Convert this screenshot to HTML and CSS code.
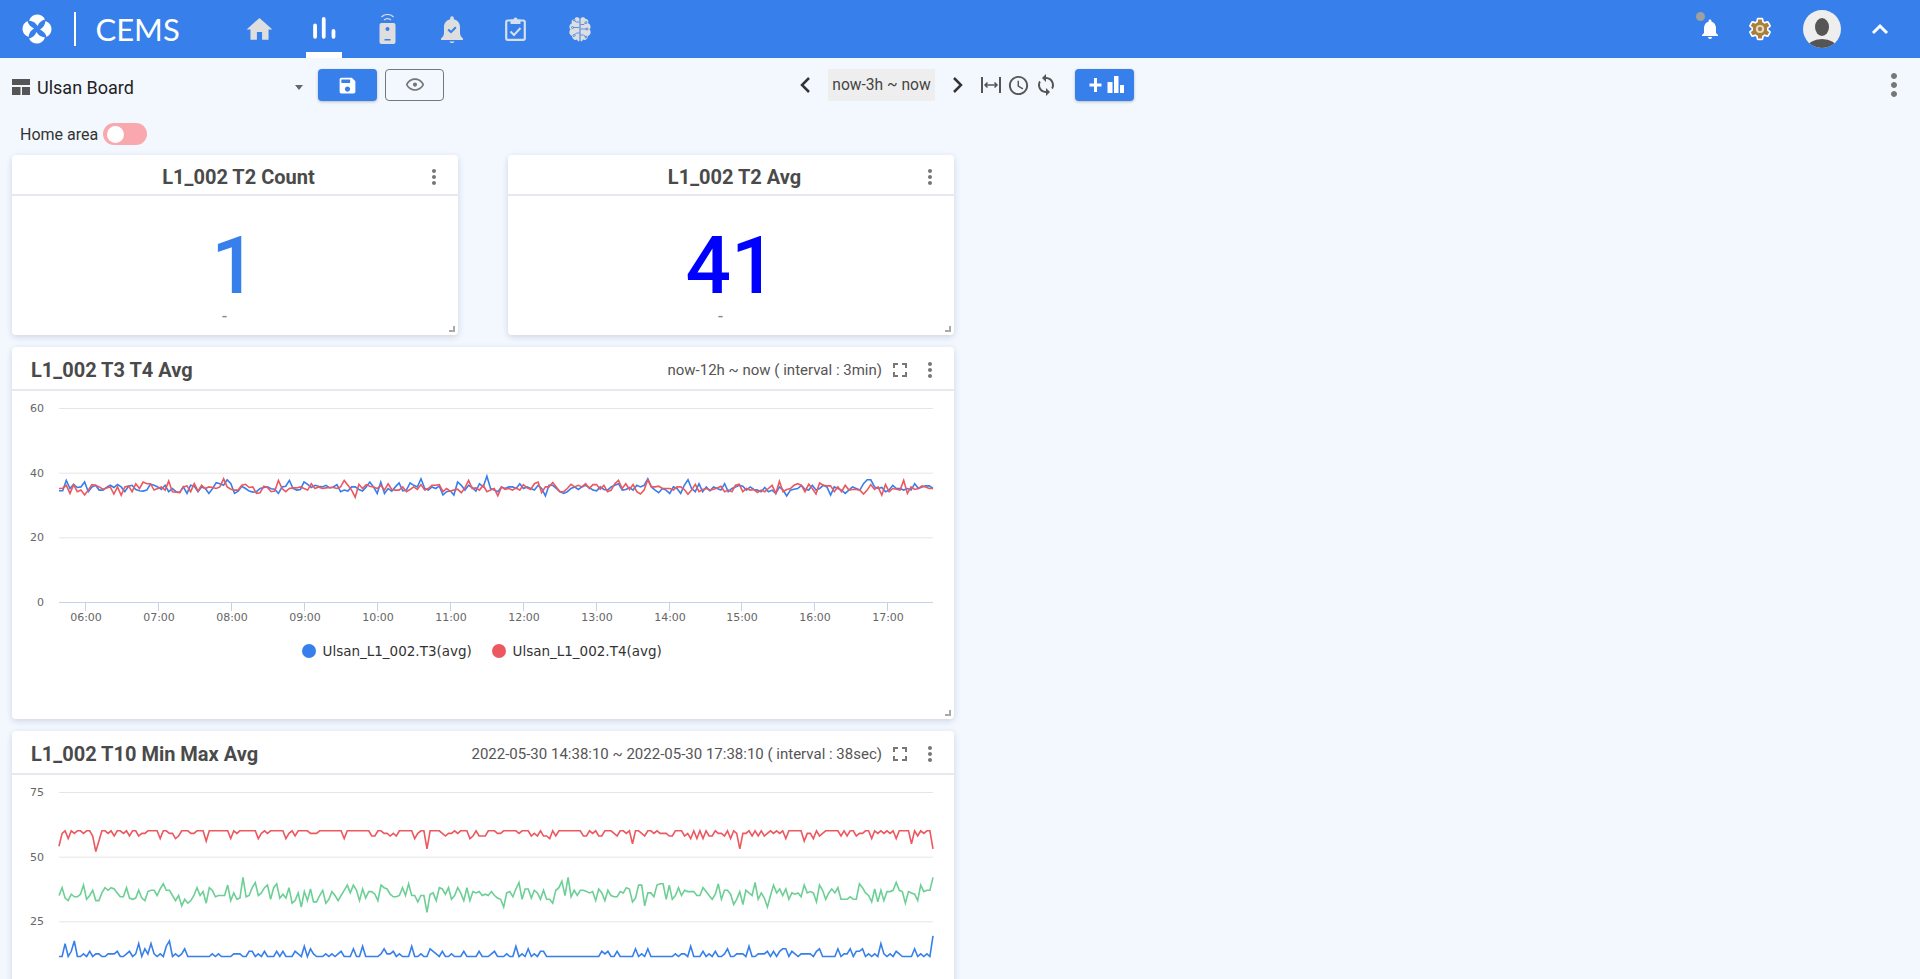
FILE: index.html
```html
<!DOCTYPE html>
<html lang="ko">

<head>
    <meta charset="UTF-8">
    <meta name="viewport" content="width=device-width, initial-scale=1.0">
    <title>CEMS</title>
    <link rel="stylesheet" href="styles.css">
</head>

<body>
    <svg class="sprite" aria-hidden="true">
        <symbol id="i-more" viewBox="0 0 24 24"><path d="M12 8c1.1 0 2-.9 2-2s-.9-2-2-2-2 .9-2 2 .9 2 2 2zm0 2c-1.1 0-2 .9-2 2s.9 2 2 2 2-.9 2-2-.9-2-2-2zm0 6c-1.1 0-2 .9-2 2s.9 2 2 2 2-.9 2-2-.9-2-2-2z"/></symbol>
        <symbol id="i-full" viewBox="0 0 24 24"><path d="M7 14H5v5h5v-2H7v-3zm-2-4h2V7h3V5H5v5zm12 7h-3v2h5v-5h-2v3zM14 5v2h3v3h2V5h-5z"/></symbol>
    </svg>

    <header class="topbar">
        <svg class="logo-mark" viewBox="0 0 30 30">
            <g fill="#fff">
                <path id="petal" d="M7 6.500C8.500 2.500 11.500.5 15 .5c3.500 0 6.500 1.700 8 5-3 .5-6 3-7.500 6.500C14 9 11 7 7 6.500z"/>
                <use href="#petal" transform="rotate(90 15 15)"/>
                <use href="#petal" transform="rotate(180 15 15)"/>
                <use href="#petal" transform="rotate(270 15 15)"/>
            </g>
        </svg>
        <span class="logo-divider"></span>
        <span class="logo-text">CEMS</span>

        <nav class="nav">
            <a class="nav-item">
                <svg viewBox="0 0 24 24" width="31" height="31"><path d="M10 20v-6h4v6h5v-8h3L12 3 2 12h3v8z"/></svg>
            </a>
            <a class="nav-item active">
                <svg viewBox="0 0 24 24" width="26" height="26"><rect x="2" y="7" width="3.5" height="14" rx="1.75"/><rect x="10" y="1" width="3.5" height="20" rx="1.75"/><rect x="19" y="12" width="3.5" height="9" rx="1.75"/></svg>
            </a>
            <a class="nav-item">
                <svg viewBox="0 0 18 30" width="19" height="30">
                    <rect x="1" y="9" width="16" height="21" rx="2"/>
                    <circle cx="9" cy="15" r="2" fill="#377fea"/>
                    <rect x="6" y="25" width="6" height="1.5" fill="#377fea"/>
                    <path d="M5.5 6a5 5 0 0 1 7 0M3 3a8.500 8.500 0 0 1 12 0" fill="none" stroke="#dedede" stroke-width="1.2"/>
                </svg>
            </a>
            <a class="nav-item">
                <svg viewBox="0 0 22 27" width="22" height="27"><path d="M11 27c1.300 0 2.500-.6 2.500-1.500h-5c0 .9 1.200 1.500 2.500 1.500zM22 22.500c-2-1.500-3-3-3-6V11c0-4-2.500-7-6.200-7.800V2a1.800 1.800 0 0 0-3.600 0v1.200C5.500 4 3 7 3 11v5.500c0 3-1 4.500-3 6V24h22z"/><path d="M7.200 13.500l2.800 2.600 4.800-4.800" fill="none" stroke="#377fea" stroke-width="2"/></svg>
            </a>
            <a class="nav-item">
                <svg viewBox="0 0 21 24" width="21" height="24">
                    <rect x="1.2" y="3.5" width="18.6" height="19.3" rx="1.5" fill="none" stroke="#d6dfee" stroke-width="2.2"/>
                    <path d="M5.500 2.500h3a2 2 0 0 1 4 0h3v4.500h-10z" fill="#d6dfee"/>
                    <path d="M5.500 14.500l3.500 3.500 6.500-7" fill="none" stroke="#d6dfee" stroke-width="2"/>
                </svg>
            </a>
            <a class="nav-item">
                <svg viewBox="0 0 24 27" width="24" height="27">
                    <path d="M11.500 2.500C10 .5 7 1 6.500 3 4 3 3 5.500 4 7 1.300 8.500.6 11.500 2.500 13.500.5 15.500 1.200 19 4 20c0 3 3 4.800 5 3.500 1 2.500 2.500 2.500 2.500.5zM12.500 2.500C14 .5 17 1 17.500 3 20 3 21 5.500 20 7c2.700 1.500 3.400 4.500 1.500 6.500 2 2 1.300 5.500-1.500 6.500 0 3-3 4.800-5 3.500-1 2.500-2.500 2.500-2.500.5z"/>
                    <g fill="none" stroke="#377fea" stroke-width=".8">
                        <path d="M11.500 6H8l-1.500-1.500M11.500 11.500H5M11.500 17H8.500l-2 2M12.500 8.500H16l1.500-1.500M12.500 13h6M12.500 19h3l2 1.500"/>
                        <circle cx="6" cy="4" r="1"/><circle cx="4.5" cy="11.5" r="1"/><circle cx="6" cy="19.5" r="1"/><circle cx="18" cy="6.5" r="1"/><circle cx="19" cy="13" r="1"/><circle cx="18" cy="21" r="1"/>
                    </g>
                </svg>
            </a>
        </nav>

        <div class="topbar-right">
            <span class="bell">
                <span class="bell-dot"></span>
                <svg viewBox="0 0 24 24" width="24" height="24" fill="#fff"><path d="M12 22c1.100 0 2-.9 2-2h-4c0 1.100.9 2 2 2zm6-6v-5c0-3.070-1.640-5.640-4.500-6.320V4c0-.83-.67-1.500-1.500-1.500s-1.500.67-1.500 1.500v.68C7.630 5.360 6 7.920 6 11v5l-2 2v1h16v-1l-2-2z"/></svg>
            </span>
            <svg class="gear" viewBox="0 0 24 24" width="26" height="26">
                <path fill="#a8803c" stroke="#fff" stroke-width="1.5" d="M19.140 12.940c.04-.3.06-.61.06-.94 0-.32-.02-.64-.07-.94l2.030-1.580c.18-.14.23-.41.12-.61l-1.920-3.320c-.12-.22-.37-.29-.59-.22l-2.390.96c-.5-.38-1.030-.7-1.620-.94l-.36-2.540c-.04-.24-.24-.41-.48-.41h-3.840c-.24 0-.43.17-.47.41l-.36 2.540c-.59.24-1.130.57-1.620.94l-2.390-.96c-.22-.08-.47 0-.59.22L2.740 8.870c-.12.21-.08.47.12.61l2.030 1.580c-.05.3-.09.63-.09.94s.02.64.07.94l-2.030 1.580c-.18.14-.23.41-.12.61l1.920 3.320c.12.22.37.29.59.22l2.390-.96c.5.38 1.030.7 1.620.94l.36 2.540c.05.24.24.41.48.41h3.840c.24 0 .44-.17.47-.41l.36-2.540c.59-.24 1.130-.56 1.620-.94l2.390.96c.22.08.47 0 .59-.22l1.920-3.320c.12-.22.07-.47-.12-.61l-2.010-1.580z"/>
                <circle cx="12" cy="12" r="3.8" fill="#e8dcc6"/>
                <circle cx="12" cy="12" r="2" fill="#a8803c"/>
            </svg>
            <svg class="avatar" viewBox="0 0 38 38" width="38" height="38">
                <defs><clipPath id="avatar-clip"><circle cx="19" cy="19" r="19"/></clipPath></defs>
                <circle cx="19" cy="19" r="19" fill="#eeeeee"/>
                <g clip-path="url(#avatar-clip)" fill="#555">
                    <ellipse cx="19" cy="17" rx="7" ry="9"/>
                    <ellipse cx="19" cy="38" rx="15" ry="9"/>
                </g>
            </svg>
            <svg class="collapse" viewBox="0 0 20 12" width="20" height="12"><path d="M3 10l7-7 7 7" fill="none" stroke="#fff" stroke-width="3"/></svg>
        </div>
    </header>

    <section class="toolbar">
        <div class="board-select">
            <svg viewBox="0 0 18 16" width="18" height="16" fill="#555"><path d="M0 0h18v6H0zM0 8h8.500v8H0zM10 8h8v8h-8z"/></svg>
            <span class="board-name">Ulsan Board</span>
            <span class="caret"></span>
        </div>
        <button class="btn btn-primary btn-save">
            <svg viewBox="0 0 24 24" width="21" height="21" fill="#fff"><path d="M17 3H5c-1.110 0-2 .9-2 2v14c0 1.100.89 2 2 2h14c1.100 0 2-.9 2-2V7l-4-4zm-5 16c-1.660 0-3-1.340-3-3s1.340-3 3-3 3 1.340 3 3-1.340 3-3 3zm3-10H5V5h10v4z"/></svg>
        </button>
        <button class="btn btn-outline">
            <svg viewBox="0 0 24 24" width="20" height="20" fill="#777"><path d="M12 6c3.790 0 7.170 2.130 8.820 5.500C19.170 14.870 15.790 17 12 17s-7.170-2.130-8.820-5.500C4.830 8.130 8.210 6 12 6m0-2C7 4 2.730 7.110 1 11.500 2.730 15.890 7 19 12 19s9.270-3.110 11-7.500C21.270 7.110 17 4 12 4zm0 5c1.380 0 2.500 1.120 2.500 2.500S13.380 14 12 14s-2.500-1.120-2.500-2.500S10.620 9 12 9z"/></svg>
        </button>

        <div class="time-range">
            <svg class="time-arrow" viewBox="0 0 24 24" width="24" height="24"><path d="M16 5l-7 7 7 7" fill="none" stroke="#333" stroke-width="2.5"/></svg>
            <span class="time-label">now-3h ~ now</span>
            <svg class="time-arrow" viewBox="0 0 24 24" width="24" height="24"><path d="M8 5l7 7-7 7" fill="none" stroke="#333" stroke-width="2.5"/></svg>
            <svg class="time-fit" viewBox="0 0 20 16" width="20" height="16"><path d="M1 0v16M19 0v16" stroke="#555" stroke-width="2"/><path d="M4 8h12M6.500 5.500L4 8l2.500 2.500M13.500 5.500L16 8l-2.500 2.500" fill="none" stroke="#555" stroke-width="1.5"/></svg>
            <svg class="time-clock" viewBox="0 0 24 24" width="23" height="23" fill="#555"><path d="M11.990 2C6.470 2 2 6.480 2 12s4.470 10 9.990 10C17.520 22 22 17.520 22 12S17.520 2 11.990 2zM12 20c-4.420 0-8-3.580-8-8s3.580-8 8-8 8 3.580 8 8-3.580 8-8 8zm.5-13H11v6l5.250 3.150.75-1.230-4.500-2.670z"/></svg>
            <svg class="time-sync" viewBox="0 0 24 24" width="24" height="24" fill="#555"><path d="M12 4V1L8 5l4 4V6c3.310 0 6 2.690 6 6 0 1.010-.25 1.970-.7 2.800l1.460 1.460C19.540 15.030 20 13.570 20 12c0-4.420-3.580-8-8-8zm0 14c-3.310 0-6-2.690-6-6 0-1.010.25-1.970.7-2.800L5.240 7.740C4.460 8.970 4 10.430 4 12c0 4.420 3.580 8 8 8v3l4-4-4-4v3z"/></svg>
        </div>

        <button class="btn btn-primary btn-add">
            <svg viewBox="0 0 40 20" width="40" height="20" fill="#fff"><path d="M4.500 8.500h4.500V3h3v5.500h4.500v3H12V17H9v-5.500H4.500z"/><rect x="22.5" y="7" width="5" height="11"/><rect x="29" y="1" width="4.5" height="17"/><rect x="35" y="10" width="4" height="8"/></svg>
        </button>
        <svg class="icon-more toolbar-more"><use href="#i-more"/></svg>
    </section>

    <div class="home-area">
        <span>Home area</span>
        <span class="toggle"><span class="toggle-knob"></span></span>
    </div>

    <main class="board">
        <article class="card stat-card">
            <div class="card-head stat-head">
                <h2 class="stat-title">L1_002 T2 Count</h2>
                <svg class="icon-more"><use href="#i-more"/></svg>
            </div>
            <div class="stat-body">
                <div class="stat-value stat-value-single">1</div>
                <div class="stat-unit">-</div>
            </div>
            <span class="resize-handle"></span>
        </article>

        <article class="card stat-card">
            <div class="card-head stat-head">
                <h2 class="stat-title">L1_002 T2 Avg</h2>
                <svg class="icon-more"><use href="#i-more"/></svg>
            </div>
            <div class="stat-body">
                <div class="stat-value stat-value-blue">41</div>
                <div class="stat-unit">-</div>
            </div>
            <span class="resize-handle"></span>
        </article>

        <article class="card chart-card">
            <div class="card-head chart-head">
                <h2 class="chart-title">L1_002 T3 T4 Avg</h2>
                <span class="chart-range">now-12h ~ now ( interval : 3min)</span>
                <svg class="icon-more"><use href="#i-full"/></svg>
                <svg class="icon-more"><use href="#i-more"/></svg>
            </div>
            <div class="chart" id="chartT3T4"></div>
            <span class="resize-handle"></span>
        </article>

        <article class="card chart-card">
            <div class="card-head chart-head">
                <h2 class="chart-title">L1_002 T10 Min Max Avg</h2>
                <span class="chart-range">2022-05-30 14:38:10 ~ 2022-05-30 17:38:10 ( interval : 38sec)</span>
                <svg class="icon-more"><use href="#i-full"/></svg>
                <svg class="icon-more"><use href="#i-more"/></svg>
            </div>
            <div class="chart" id="chartT10"></div>
            <span class="resize-handle"></span>
        </article>
    </main>

    <script src="chart.js"></script>
</body>

</html>
```

FILE: styles.css
```css
* {
    box-sizing: border-box;
}

html, body {
    height: 100%;
}

body {
    margin: 0;
    overflow: hidden;
    background: #f3f8ff;
    color: #333;
    font-family: Roboto, "Noto Sans", sans-serif;
}

.sprite {
    display: none;
}

.icon-more {
    flex: none;
    width: 24px;
    height: 24px;
    fill: #777;
}

/* top bar */
.topbar {
    display: flex;
    align-items: center;
    height: 58px;
    padding-left: 22px;
    background: #377fea;
}

.logo-mark {
    flex: none;
    width: 30px;
    height: 30px;
}

.logo-divider {
    flex: none;
    width: 1.5px;
    height: 34px;
    margin-left: 22px;
    background: #fff;
}

.logo-text {
    flex: none;
    width: 85px;
    margin-left: 20px;
    color: #fff;
    font-family: Lato, sans-serif;
    font-size: 31px;
    line-height: 58px;
    white-space: nowrap;
}

.nav {
    display: flex;
    gap: 28px;
    height: 58px;
    margin-left: 61px;
}

.nav-item {
    display: flex;
    align-items: center;
    justify-content: center;
    width: 36px;
    height: 58px;
    padding-top: 6px;
    border-bottom: 6px solid transparent;
    fill: #dedede;
}

.nav-item.active {
    border-bottom-color: #fff;
    fill: #fff;
}

.topbar-right {
    display: flex;
    align-items: center;
    margin-left: auto;
    padding-right: 30px;
}

.bell {
    position: relative;
    display: flex;
    margin-right: 25px;
}

.bell-dot {
    position: absolute;
    top: -5px;
    left: -2px;
    width: 9px;
    height: 9px;
    border-radius: 50%;
    background: #a0a0a0;
}

.avatar {
    margin-left: 30px;
}

.collapse {
    margin-left: 29px;
}

/* toolbar */
.toolbar {
    display: flex;
    align-items: center;
    height: 32px;
    margin-top: 11px;
    padding: 0 8px 0 12px;
}

.board-select {
    display: flex;
    align-items: center;
    width: 298px;
    margin-right: 8px;
    padding-top: 4px;
}

.board-name {
    margin-left: 7px;
    color: #222;
    font-size: 18px;
}

.caret {
    width: 0;
    height: 0;
    margin-left: auto;
    margin-right: 7px;
    border-left: 4.5px solid transparent;
    border-right: 4.5px solid transparent;
    border-top: 5px solid #666;
}

.btn {
    display: flex;
    align-items: center;
    justify-content: center;
    height: 32px;
    padding: 0;
    border-radius: 4px;
    cursor: pointer;
}

.btn-primary {
    border: none;
    background: #377fea;
    box-shadow: 0 1px 3px rgba(0, 0, 0, 0.25);
}

.btn-outline {
    width: 59px;
    margin-left: 8px;
    border: 1px solid #777;
    background: transparent;
}

.btn-save {
    width: 59px;
}

.time-range {
    display: flex;
    align-items: center;
    margin-left: 349px;
}

.time-label {
    width: 107px;
    height: 32px;
    margin: 0 11px;
    background: #eee;
    color: #444;
    font-size: 15.6px;
    line-height: 32px;
    text-align: center;
}

.time-fit {
    margin-left: 11px;
}

.time-clock {
    margin-left: 6px;
}

.time-sync {
    margin-left: 4px;
}

.btn-add {
    width: 59px;
    margin-left: 17px;
}

.toolbar-more {
    width: 36px;
    height: 36px;
    margin-left: auto;
}

/* home area switch */
.home-area {
    display: flex;
    align-items: center;
    gap: 5px;
    height: 22px;
    margin-top: 22px;
    padding-left: 20px;
    color: #333;
    font-size: 16px;
}

.toggle {
    display: flex;
    align-items: center;
    width: 44px;
    height: 22px;
    padding-left: 4px;
    border-radius: 11px;
    background: #f9a8ad;
}

.toggle-knob {
    width: 17px;
    height: 17px;
    border-radius: 50%;
    background: #fff;
}

/* board */
.board {
    display: grid;
    grid-template-columns: 446px 446px;
    justify-content: start;
    column-gap: 50px;
    row-gap: 12px;
    margin-top: 10px;
    padding-left: 12px;
}

.card {
    position: relative;
    border-radius: 4px;
    background: #fff;
    box-shadow: 0 2px 6px rgba(60, 70, 100, 0.2);
}

.stat-card {
    height: 180px;
}

.chart-card {
    grid-column: span 2;
    height: 372px;
}

.card-head {
    display: flex;
    align-items: center;
    border-bottom: 2px solid #e8e8f0;
}

.stat-head {
    height: 41px;
    padding: 4px 12px 0 43px;
}

.stat-title {
    flex: 1;
    margin: 0;
    color: #4a4a4a;
    font-size: 20px;
    font-weight: 700;
    text-align: center;
}

.stat-body {
    padding-top: 30px;
    text-align: center;
}

.stat-value {
    color: #377fea;
    font-size: 80px;
    font-weight: 500;
    line-height: 80px;
}

.stat-value-single {
    padding-right: 2px;
}

.stat-value-blue {
    color: #0000ff;
}

.stat-unit {
    padding-right: 21px;
    color: #888;
    font-size: 18px;
    line-height: 20px;
}

.resize-handle {
    position: absolute;
    right: 3px;
    bottom: 3px;
    width: 6px;
    height: 6px;
    border-right: 2px solid #aaa;
    border-bottom: 2px solid #aaa;
}

.chart-head {
    gap: 6px;
    height: 44px;
    padding: 4px 12px 0 19px;
}

.chart-title {
    margin: 0 auto 0 0;
    color: #4a4a4a;
    font-size: 20px;
    font-weight: 700;
}

.chart-range {
    color: #555;
    font-size: 15px;
}

.chart svg {
    display: block;
}

.chart text {
    font-family: "DejaVu Sans", sans-serif;
    font-size: 11px;
    fill: #666;
}

.chart .legend-label {
    font-size: 13.5px;
    fill: #333;
}
```

FILE: chart.js
```js
const SVG_NS = "http://www.w3.org/2000/svg";

// plot area inside the chart svg
const plot = { left: 47, top: 17, width: 874, height: 194 };

const t3 = [
    344,344,376,351,364,354,356,371,341,356, 361,346,346,354,361,354,363,356,341,358,
    361,348,344,343,346,364,361,356,348,361, 341,351,341,339,356,336,361,358,341,356,
    351,336,351,369,366,361,378,366,336,343, 358,351,343,340,341,351,354,356,350,349,
    336,356,358,376,351,346,348,371,364,354, 361,358,356,361,353,356,363,341,346,343,
    356,356,348,343,356,371,356,336,371,336, 351,343,356,368,344,346,368,361,356,381,
    351,346,356,351,358,331,341,344,331,371, 361,346,361,354,343,366,356,389,351,346,
    341,356,351,356,356,351,366,351,356,351, 346,361,351,328,361,361,351,341,336,341,
    351,356,348,356,361,354,346,344,356,348, 346,356,361,366,346,348,354,346,361,356,
    361,381,356,346,338,351,346,336,356,351, 336,361,378,351,341,366,341,356,344,356,
    351,346,366,341,351,356,361,358,346,356, 348,346,341,354,341,346,336,356,346,328,
    346,349,351,361,349,346,361,346,351,361, 356,331,356,351,346,336,346,356,351,346,
    366,378,378,356,351,354,341,346,361,351, 351,346,351,346,366,351,356,359,359,351
].map(v => v / 10);

const t4 = [
    351,352,361,336,363,341,346,331,346,363, 361,356,349,353,356,334,356,330,356,359,
    341,366,351,371,366,366,346,351,356,346, 374,341,340,338,356,359,341,366,343,361,
    351,356,354,351,356,381,356,349,346,346, 361,364,354,356,336,338,358,354,341,343,
    376,351,341,351,353,353,356,351,346,366, 351,356,351,353,354,354,351,356,376,361,
    346,324,364,351,363,358,356,351,361,346, 366,348,346,346,356,341,348,356,348,363,
    346,351,361,361,363,341,351,343,346,349, 338,353,376,351,353,346,361,341,346,351,
    328,356,348,351,346,353,346,363,353,348, 366,371,338,356,356,370,356,341,341,351,
    364,356,361,356,366,351,363,363,349,361, 341,346,366,376,351,366,348,363,341,334,
    346,378,356,356,358,351,351,351,346,356, 356,348,333,346,364,341,348,351,346,349,
    353,358,341,346,341,361,364,341,351,346, 348,339,346,341,351,361,336,373,341,348,
    351,361,366,361,341,364,351,334,368,361, 359,359,341,356,341,361,346,348,348,346,
    334,346,363,348,356,331,363,341,351,349, 346,376,336,356,348,351,359,356,351,351
].map(v => v / 10);

const t10Max = [
    54,59,60,57,60,59,60,60,59,60, 60,58,52,56,60,60,59,60,58,60, 60,59,60,58,60,60,58,59,59,60,
    60,60,60,57,60,60,59,59,57,58, 60,60,60,59,59,60,60,60,56,60, 60,60,60,60,60,60,57,60,59,60,
    60,60,60,60,60,57,59,60,59,60, 60,60,60,60,57,59,60,58,60,60, 60,60,59,59,59,60,60,60,60,60,
    60,60,60,57,60,60,60,60,60,60, 60,60,58,58,60,60,59,59,58,59, 58,60,60,60,60,60,57,59,60,60,
    53,60,60,60,60,59,58,59,59,60, 59,60,60,60,57,58,60,58,58,58, 60,60,60,59,
    59,60,60,60,60,60,59,60,60,60, 58,59,58,60,58,58,57,60,58,60, 60,60,60,60,60,60,60,
    58,58,60,59,60,58,58,60,60,60, 59,58,60,60,59,60,55,60,60,59, 58,60,60,59,60,59,59,59,58,58,
    60,60,60,58,59,57,60,57,60,57, 60,58,58,60,59,59,58,60,57,60, 59,53,59,59,60,58,60,58,60,58,
    59,60,59,60,59,60,57,60,60,60, 60,60,56,59,59,57,60,58,59,60, 60,60,60,60,58,60,58,60,60,58,
    59,59,60,60,57,60,59,60,59,60, 59,60,57,60,60,60,60,55,60,58, 60,59,60,60,53
];

const t10Avg = [
    35,38,34,33,35.5,34.5,34.5,35.5,39,33.5, 35,37,33,33,36,38,37,38,37.5,36,
    34.5,34.5,38,34,33.5,34,37,34,33,36.5, 37,37,35,37.5,39.5,37,37,35,33,35,
    31,33.5,32,33,35,38,35,36.5,32,38, 37,34.5,35,35,35,39,33,36,33.5,34,
    42,34.5,35,38,40,35,36,38,39,33.5, 38,39.5,34,35.5,34,38,32,33,36,30.5,
    36.5,33,37.5,32.5,32.5,35,37,32,33.5,36.5, 35,33,35,37,39,36,39,37,33,37.5,
    34,36.5,36.5,35.5,33,39,38,37.5,35.5,34.5, 34.5,35,38,35,39.5,35,35,32.5,35,35,
    28.5,35.5,36,33,38,37.5,35.5,38,33.5,35, 38,36,33,38,33,36.5,36,36.5,35,35.5,
    35,36.5,35,34, 33.5,30.5,36,36.5,34.5,37.5, 40,33.5,37.5,37.5,34,37,36,33.5,37,33.5,
    33.5,32,37,38,40.5,35,42,34.5,37,35, 37,37,36.5,36,36.5,33,37.5,36,33,37,
    35,34.5,34.5,36.5,36,38,37.5,32.5,34,39, 39,31,36,36,34.5,39,39.5,39.5,33.5,39,
    33.5,35,38,35,37,36.5,36.5,36.5,35,35, 38,36.5,35,33.5,35.5,39.5,33.5,37,37,35.5,
    31.5,33.5,36.5,31.5,37,36,35,40,33.5,36, 34,30.5,35,39,36,37.5,35,37.5,33.5,36,
    35.5,36,34.5,39,36,36.5,36,32.5,39,37, 33.5,36,37.5,36,38,33.5,33.5,33.5,34.5,33.5,
    33.5,39.5,38,36,35,32.5,37.5,32.5,37,33, 36.5,36.5,37,40,37,36.5,32,36.5,36,35.5,
    33,39,36.5,37,37,42
];

// blue series sits on a floor of 11.4, stored as the rise above it
const t10Min = [
    0,0,5,0,2,6,0,0,1,0, 2,0,1,1,0,0,1,1,1,2, 0,0,1,2,0,1,5,0,3,1, 5,1,0,1,0,4,6,0,1,0,
    1,3,0,0,0,0,0,0,0,0, 1,0,1,0,0,0,0,1,1,1, 0,0,2,2,0,1,0,2,0,0, 0,2,0,2,0,0,0,2,1,0,
    4,0,3,1,0,0,0,1,0,1, 0,1,2,0,0,0,3,0,0,4, 0,0,0,0,0,1,3,1,1,2, 0,1,0,0,0,4,0,0,1,0,
    0,3,2,1,0,2,0,0,1,0, 0,0,2,0,0,0,0,2,0,0, 0,1,2,0,
    0,0,1,0,0,4,0,1,0,3, 0,1,0,2,2,0,0,0,0,0, 0,0,0,0,0,0,0,0,0,0,
    0,0,0,2,1,2,0,0,2,0, 0,0,0,0,3,0,1,0,3,0, 0,0,0,0,0,0,0,1,0,1,
    1,0,4,0,0,0,2,0,1,0, 2,0,0,1,3,0,0,1,1,1, 0,4,0,0,1,1,1,2,0,2,
    0,2,3,3,0,2,1,0,1,1, 1,1,0,2,3,0,0,0,0,0, 3,0,1,1,3,0,2,2,3,0,
    1,0,1,0,5,1,0,1,0,2, 1,0,0,0,0,3,0,1,0,1, 0,8
].map(v => v + 11.4);

function add(parent, name, attrs, text) {
    const node = document.createElementNS(SVG_NS, name);
    for (const key in attrs) node.setAttribute(key, attrs[key]);
    if (text) node.textContent = text;
    parent.appendChild(node);
    return node;
}

function drawChart(id, options) {
    const svg = add(document.getElementById(id), "svg", { width: 942, height: 328 });
    const scaleY = v => plot.top + plot.height - v / options.max * plot.height;

    options.gridValues.forEach(v => {
        const y = scaleY(v) + 0.5;
        add(svg, "line", {
            x1: plot.left, x2: plot.left + plot.width, y1: y, y2: y,
            stroke: v === 0 ? "#c5d3e8" : "#e6e6e6"
        });
        add(svg, "text", { x: plot.left - 15, y: y + 3.6, "text-anchor": "end" }, String(v));
    });

    (options.ticks || []).forEach((label, i) => {
        const x = Math.round(plot.left + 26.3 + i * 72.9) + 0.5;
        const axisY = scaleY(0);
        add(svg, "line", { x1: x, x2: x, y1: axisY, y2: axisY + 9, stroke: "#c5d3e8" });
        add(svg, "text", { x: x + 0.5, y: axisY + 19, "text-anchor": "middle" }, label);
    });

    options.series.forEach(s => {
        const step = plot.width / (s.values.length - 1);
        const points = s.values.map((v, i) => (plot.left + i * step).toFixed(1) + "," + scaleY(v).toFixed(1));
        add(svg, "polyline", {
            points: points.join(" "),
            fill: "none",
            stroke: s.color,
            "stroke-width": 1.6
        });
    });

    (options.legend || []).forEach(item => {
        add(svg, "circle", { cx: item.x, cy: 260, r: 7, fill: item.color });
        add(svg, "text", { x: item.x + 13.5, y: 264.5, class: "legend-label" }, item.label);
    });
}

drawChart("chartT3T4", {
    max: 60,
    gridValues: [60, 40, 20, 0],
    ticks: ["06:00", "07:00", "08:00", "09:00", "10:00", "11:00", "12:00", "13:00", "14:00", "15:00", "16:00", "17:00"],
    series: [
        { values: t3, color: "#377fea" },
        { values: t4, color: "#ec5860" }
    ],
    legend: [
        { x: 297, color: "#377fea", label: "Ulsan_L1_002.T3(avg)" },
        { x: 487, color: "#ec5860", label: "Ulsan_L1_002.T4(avg)" }
    ]
});

drawChart("chartT10", {
    max: 75,
    gridValues: [75, 50, 25],
    series: [
        { values: t10Min, color: "#377fea" },
        { values: t10Avg, color: "#6ccf94" },
        { values: t10Max, color: "#ec5860" }
    ]
});
```
